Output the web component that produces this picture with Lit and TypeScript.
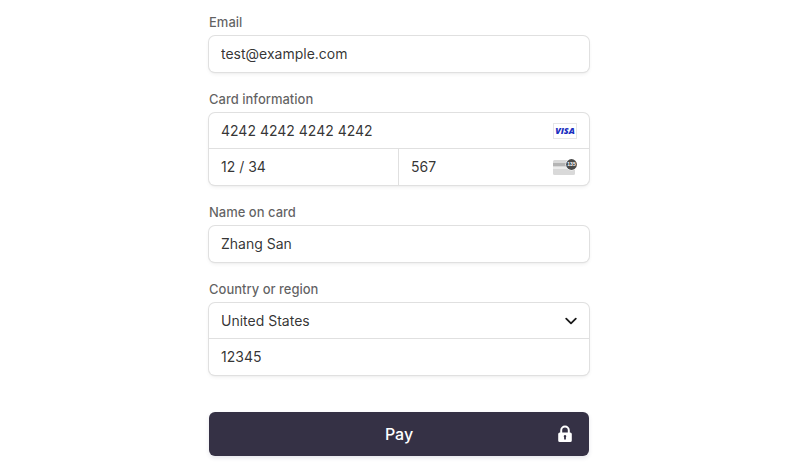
import { LitElement, css, html } from "lit";
import { customElement } from "lit/decorators.js";

@customElement("app-root")
export class AppRoot extends LitElement {
  static styles = css`
    :host {
      display: block;
      background: #fff;
      font-family: Inter, "Liberation Sans", sans-serif;
      color: rgba(26, 26, 26, 0.9);
    }
    *,
    *::before {
      box-sizing: border-box;
    }
    .checkout {
      max-width: 382px;
      margin: 0 auto;
      padding: 14px 2px 19px 0;
    }
    .form {
      display: flex;
      flex-direction: column;
      gap: 19px;
    }
    .group {
      display: flex;
      flex-direction: column;
      gap: 5px;
    }
    .label {
      font-size: 13px;
      font-weight: 500;
      line-height: 17px;
      color: rgba(26, 26, 26, 0.7);
    }
    .box {
      border-radius: 6px;
      background: #fff;
      box-shadow:
        0 0 0 1px #e0e0e0,
        0 2px 4px rgba(0, 0, 0, 0.07),
        0 1px 2px rgba(0, 0, 0, 0.05);
    }
    .row {
      display: flex;
    }
    .row + .row {
      box-shadow: 0 -1px 0 #e0e0e0;
    }
    .cell {
      flex: 1;
      min-width: 0;
      display: flex;
      align-items: center;
      padding-right: 12px;
    }
    .cell + .cell {
      box-shadow: -1px 0 0 #e0e0e0;
    }
    .input {
      flex: 1;
      min-width: 0;
      width: 100%;
      height: 36px;
      margin: 0;
      padding: 0 12px 2px;
      border: 0;
      outline: 0;
      background: transparent;
      font: inherit;
      font-size: 14px;
      color: inherit;
    }
    .select {
      appearance: none;
    }
    .icon {
      display: block;
      flex: none;
    }
    .pay {
      width: 100%;
      height: 44px;
      margin-top: 18px;
      padding: 0 16px;
      display: grid;
      grid-template-columns: 1fr auto 1fr;
      align-items: center;
      border: 0;
      border-radius: 6px;
      background: #353145;
      color: #fff;
      font: inherit;
      font-size: 16px;
      font-weight: 500;
      box-shadow: 0 2px 4px rgba(50, 50, 93, 0.12);
    }
    .caption {
      grid-column: 2;
    }
    .lock {
      justify-self: end;
    }
  `;

  render() {
    return html`
      <main class="checkout">
        <form class="form" @submit=${(e: Event) => e.preventDefault()}>
          <div class="group">
            <label class="label" for="email">Email</label>
            <div class="box row">
              <input class="input" id="email" type="email" .value=${"test@example.com"} />
            </div>
          </div>

          <div class="group">
            <label class="label" for="number">Card information</label>
            <div class="box">
              <div class="row">
                <div class="cell">
                  <input class="input" id="number" inputmode="numeric" .value=${"4242 4242 4242 4242"} />
                  ${this.visa()}
                </div>
              </div>
              <div class="row">
                <div class="cell">
                  <input class="input" aria-label="Expiration" .value=${"12 / 34"} />
                </div>
                <div class="cell">
                  <input class="input" aria-label="CVC" .value=${"567"} />
                  ${this.cvc()}
                </div>
              </div>
            </div>
          </div>

          <div class="group">
            <label class="label" for="name">Name on card</label>
            <div class="box row">
              <input class="input" id="name" .value=${"Zhang San"} />
            </div>
          </div>

          <div class="group">
            <label class="label" for="country">Country or region</label>
            <div class="box">
              <div class="row">
                <div class="cell">
                  <select class="input select" id="country">
                    <option>United States</option>
                  </select>
                  <svg class="icon" width="12" height="12" viewBox="0 0 12 12" aria-hidden="true">
                    <path d="M1.200 3.600 6 8.400l4.800-4.800" fill="none" stroke="#1a1a1a" stroke-width="1.800" stroke-linecap="round" stroke-linejoin="round" />
                  </svg>
                </div>
              </div>
              <div class="row">
                <input class="input" aria-label="ZIP" .value=${"12345"} />
              </div>
            </div>
          </div>

          <button class="pay" type="submit">
            <span class="caption">Pay</span>
            <svg class="icon lock" width="16" height="18" viewBox="0 0 16 18" aria-hidden="true">
              <path d="M4.200 8V5.400a3.800 3.800 0 0 1 7.600 0V8" fill="none" stroke="#fff" stroke-width="2" />
              <path fill="#fff" fill-rule="evenodd" d="M2.800 7.500h10.400a1.600 1.600 0 0 1 1.600 1.600v6.300a1.600 1.600 0 0 1-1.600 1.600H2.800a1.600 1.600 0 0 1-1.600-1.600V9.100A1.600 1.600 0 0 1 2.800 7.500ZM8 10a1.300 1.300 0 0 0-.9 2.200V14.500h1.800v-2.300A1.300 1.300 0 0 0 8 10Z" />
            </svg>
          </button>
        </form>
      </main>
    `;
  }

  private visa() {
    return html`
      <svg class="icon" width="24" height="16" viewBox="0 0 24 16" role="img" aria-label="Visa">
        <rect x=".5" y=".5" width="23" height="15" fill="#fff" stroke="#e6e6e6" />
        <text x="12" y="11" text-anchor="middle" font-family="Open Sans, sans-serif" font-size="9" font-weight="800" font-style="italic" fill="#1a2fc0">VISA</text>
      </svg>
    `;
  }

  private cvc() {
    return html`
      <svg class="icon" width="24" height="16" viewBox="0 0 24 16" aria-hidden="true">
        <rect y="1" width="22" height="15" rx="1.500" fill="#d9d9d9" />
        <rect y="4" width="22" height="3" fill="#b4b4b4" />
        <rect y="8" width="20" height="2" fill="#ececec" />
        <circle cx="18.500" cy="5.500" r="6" fill="#fff" />
        <circle cx="18.500" cy="5.500" r="5.400" fill="#4a4a4a" />
        <text x="18.500" y="7.400" text-anchor="middle" font-family="Liberation Sans, sans-serif" font-size="5" font-weight="700" fill="#fff">135</text>
      </svg>
    `;
  }
}
